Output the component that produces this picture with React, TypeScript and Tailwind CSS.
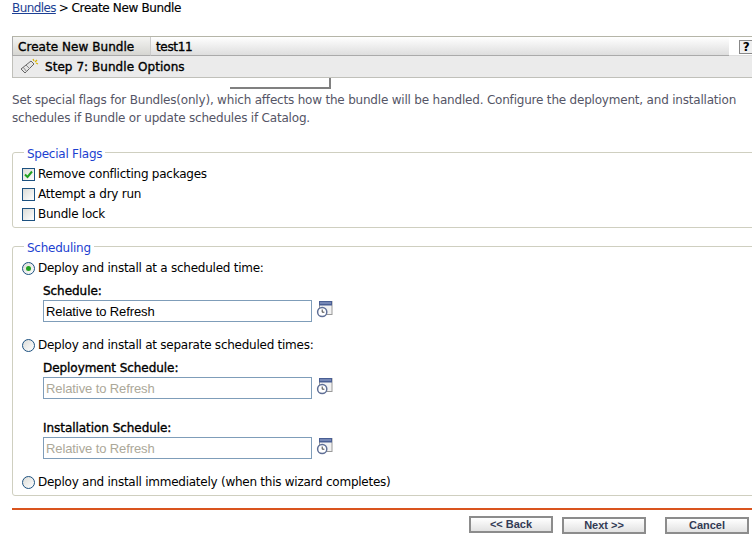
import * as React from "react";

function ScheduleIcon() {
  return (
    <svg width="17" height="18" viewBox="0 0 17 18" className="ml-[4px] shrink-0">
      <rect x="3.5" y="1.5" width="12.5" height="13" fill="#f2f2f2" stroke="#9a9a9a" />
      <rect x="3" y="1" width="13" height="4.5" fill="#4a5f94" />
      <rect x="4" y="2.5" width="11" height="1" fill="#9fb0d6" />
      <circle cx="6.2" cy="12" r="4.6" fill="#fff" stroke="#5f6f96" strokeWidth="1.5" />
      <path d="M6.2 9.5V12.2H8.4" fill="none" stroke="#444" strokeWidth="1" />
    </svg>
  );
}

function WandIcon() {
  return (
    <svg width="19" height="17" viewBox="0 0 19 17">
      <path d="M1 11L11 3L14 6L5 15Z" fill="#e4e4e4" stroke="#666" />
      <path d="M3 9L7 14M6 7L10 11" stroke="#888" />
      <path d="M13 1L14 3M17 2L15 4M18 6L16 5" stroke="#d8b400" strokeWidth="1.2" />
    </svg>
  );
}

function Check({ checked, label }: { checked?: boolean; label: string }) {
  return (
    <div className="flex items-center h-5">
      <div className="w-[13px] h-[13px] border border-[#1c5180] bg-gradient-to-br from-[#dcdcd7] to-white flex items-center justify-center">
        {checked && (
          <svg width="9" height="9" viewBox="0 0 9 9">
            <path d="M1 4.5L3.5 7L8 1.5" fill="none" stroke="#21a121" strokeWidth="2" />
          </svg>
        )}
      </div>
      <span className="ml-[3px] text-black">{label}</span>
    </div>
  );
}

function Radio({ checked, label }: { checked?: boolean; label: string }) {
  return (
    <div className="flex items-center h-5">
      <div className="w-[13px] h-[13px] rounded-full border border-[#1c5180] bg-gradient-to-br from-[#dcdcd7] to-white flex items-center justify-center">
        {checked && <div className="w-[5px] h-[5px] rounded-full bg-[#21a121]" />}
      </div>
      <span className="ml-[3px] text-black">{label}</span>
    </div>
  );
}

function ScheduleField({ label, disabled }: { label: string; disabled?: boolean }) {
  return (
    <div className="ml-[21px]">
      <div className="h-[17px] leading-[19px] text-black tracking-[-0.05px] [-webkit-text-stroke:0.35px_black]">{label}</div>
      <div className="flex items-start mt-[1px]">
        <div
          className={
            "w-[269px] h-[22px] border border-[#7f9db9] bg-white px-[2px] leading-[21px] text-[13px] tracking-[-0.1px] font-['Liberation_Sans',sans-serif] " +
            (disabled ? "text-[#aca899]" : "text-black")
          }
        >
          Relative to Refresh
        </div>
        <ScheduleIcon />
      </div>
    </div>
  );
}

function NavButton({ label }: { label: string }) {
  return (
    <button className="w-[84px] h-[17px] border-2 border-[#8c8c8c] bg-gradient-to-b from-white to-[#e2e2e2] text-[11px] tracking-normal font-bold leading-[13px] text-[#333b55] font-['Liberation_Sans',sans-serif]">
      {label}
    </button>
  );
}

export default function App(): React.ReactElement {
  return (
    <div className="relative w-[752px] h-[536px] overflow-hidden bg-white font-['DejaVu_Sans',sans-serif] text-[12px] tracking-[-0.25px] pl-3">
      <div className="h-[36px] pt-[1px] leading-[14px] text-black tracking-[-0.35px]">
        <a className="text-[#1c3f94] underline tracking-[-0.6px]">Bundles</a>
        <span className="mx-[3px]">&gt;</span>
        <span className="[-webkit-text-stroke:0.15px_black]">Create New Bundle</span>
      </div>

      <div className="flex h-[20px] w-[740px] border-t border-[#b5b5a8]">
        <div className="w-[139px] bg-gradient-to-b from-[#f4f4f2] to-[#d6d6d2] border-b border-l border-[#aaa] pl-[5px] pt-[1px] leading-[18px] text-black border-r border-r-[#ccc] tracking-[0.05px] [-webkit-text-stroke:0.35px_black]">
          Create New Bundle
        </div>
        <div className="w-[578px] bg-gradient-to-b from-white to-[#dedede] border-b border-[#aaa] pl-[5px] pt-[1px] leading-[18px] text-black tracking-[-0.35px] [-webkit-text-stroke:0.35px_black]">
          test11
        </div>
        <div className="flex-1 flex justify-end border-b border-[#ddd]">
          <div className="w-[13px] h-[14px] border border-[#888] border-r-0 bg-[#f0f0f0] font-bold text-center leading-[12px] mt-[3px]">?</div>
        </div>
      </div>

      <div className="flex items-center h-[22px] w-[740px] bg-[#ebebeb] border-b border-l border-[#c0c0ba] pl-[7px]">
        <WandIcon />
        <span className="ml-[6px] text-black tracking-[0.05px] [-webkit-text-stroke:0.35px_black]">Step 7: Bundle Options</span>
      </div>

      <div className="absolute left-[230px] top-[78px] w-[101px] h-[11px] border-r-2 border-b-2 border-[#808080]" />

      <p className="mt-[13px] w-[740px] leading-[18px] text-[#555566] tracking-[-0.2px]">
        Set special flags for Bundles(only), which affects how the bundle will be handled. Configure the deployment, and installation schedules if Bundle or update schedules if Catalog.
      </p>

      <fieldset className="mt-[18px] w-[760px] h-[83px] border border-[#cfcfc0] rounded-[3px] pl-[9px] pt-[5px]">
        <legend className="ml-[2px] px-[3px] text-[#1c3fd0] leading-[14px] translate-y-[2px]">Special Flags</legend>
        <Check checked label="Remove conflicting packages" />
        <Check label="Attempt a dry run" />
        <Check label="Bundle lock" />
      </fieldset>

      <fieldset className="mt-[11px] w-[760px] h-[257px] border border-[#cfcfc0] rounded-[3px] pl-[9px] pt-[5px]">
        <legend className="ml-[2px] px-[3px] text-[#1c3fd0] leading-[14px] translate-y-[2px]">Scheduling</legend>
        <Radio checked label="Deploy and install at a scheduled time:" />
        <div className="mt-[4px]">
          <ScheduleField label="Schedule:" />
        </div>
        <div className="mt-[13px]">
          <Radio label="Deploy and install at separate scheduled times:" />
        </div>
        <div className="mt-[4px]">
          <ScheduleField label="Deployment Schedule:" disabled />
        </div>
        <div className="mt-[20px]">
          <ScheduleField label="Installation Schedule:" disabled />
        </div>
        <div className="mt-[13px]">
          <Radio label="Deploy and install immediately (when this wizard completes)" />
        </div>
      </fieldset>

      <div className="mt-[12px] h-[2px] w-[740px] bg-[#d9541e]" />

      <div className="flex mt-[6px] ml-[457px]">
        <NavButton label="<< Back" />
        <div className="ml-[9px]">
          <NavButton label="Next >>" />
        </div>
        <div className="ml-[19px]">
          <NavButton label="Cancel" />
        </div>
      </div>
    </div>
  );
}
